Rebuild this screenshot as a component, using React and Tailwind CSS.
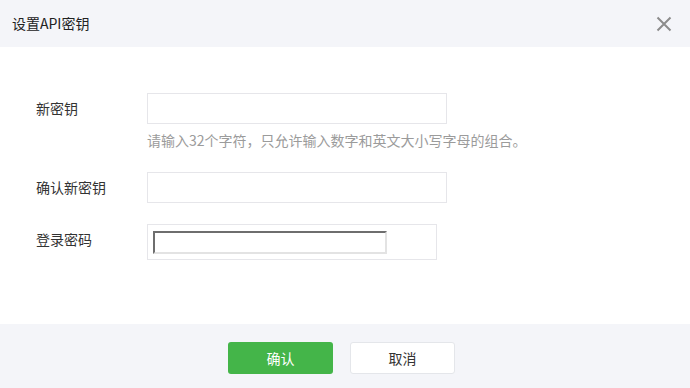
import React from 'react'

const font = { fontFamily: '"Noto Sans CJK SC", "Noto Sans", sans-serif' }

const Row = ({ label, children, className = '' }) => (
  <div className={`flex items-start ${className}`}>
    <div className="w-[111px] shrink-0 text-[14px] leading-[31px] text-[#333]">{label}</div>
    <div>{children}</div>
  </div>
)

export default function App() {
  return (
    <div className="w-[690px] h-[388px] flex flex-col bg-white" style={font}>
      {/* header */}
      <div className="h-[47px] shrink-0 bg-[#f4f5f9] flex items-center justify-between pl-3 pr-[18px]">
        <span className="text-[14px] text-[#222]">设置API密钥</span>
        <svg width="16" height="16" viewBox="0 0 16 16" className="text-[#8c8c8c]">
          <path d="M1.5 1.5 L14.5 14.5 M14.5 1.5 L1.5 14.5" stroke="currentColor" strokeWidth="2" fill="none" />
        </svg>
      </div>

      {/* body */}
      <div className="flex-1 pl-9 pt-[46px]">
        <Row label="新密钥">
          <input className="w-[300px] h-[31px] border border-[#e6e6ea] outline-none px-2 text-[14px]" />
          <div className="mt-[6px] text-[14px] leading-[20px] text-[#9b9b9b]">
            请输入32个字符，只允许输入数字和英文大小写字母的组合。
          </div>
        </Row>
        <Row label="确认新密钥" className="mt-[22px]">
          <input className="w-[300px] h-[31px] border border-[#e6e6ea] outline-none px-2 text-[14px]" />
        </Row>
        <Row label="登录密码" className="mt-[21px]">
          <div className="w-[290px] h-[36px] border border-[#e6e6ea] pl-[5px] pt-[6px]">
            <input
              type="password"
              className="block w-[234px] h-[23px] border-2 border-t-[#6e6e6e] border-l-[#6e6e6e] border-b-[#e3e3e3] border-r-[#e3e3e3] outline-none px-1 text-[14px]"
            />
          </div>
        </Row>
      </div>

      {/* footer */}
      <div className="h-[64px] shrink-0 bg-[#f4f5f9] flex items-start pt-[18px] pl-[228px] gap-[17px]">
        <button className="w-[105px] h-[32px] rounded-[3px] bg-[#44b549] text-white text-[14px]">确认</button>
        <button className="w-[105px] h-[32px] rounded-[3px] bg-white border border-[#e4e6ea] text-[#333] text-[14px]">取消</button>
      </div>
    </div>
  )
}
